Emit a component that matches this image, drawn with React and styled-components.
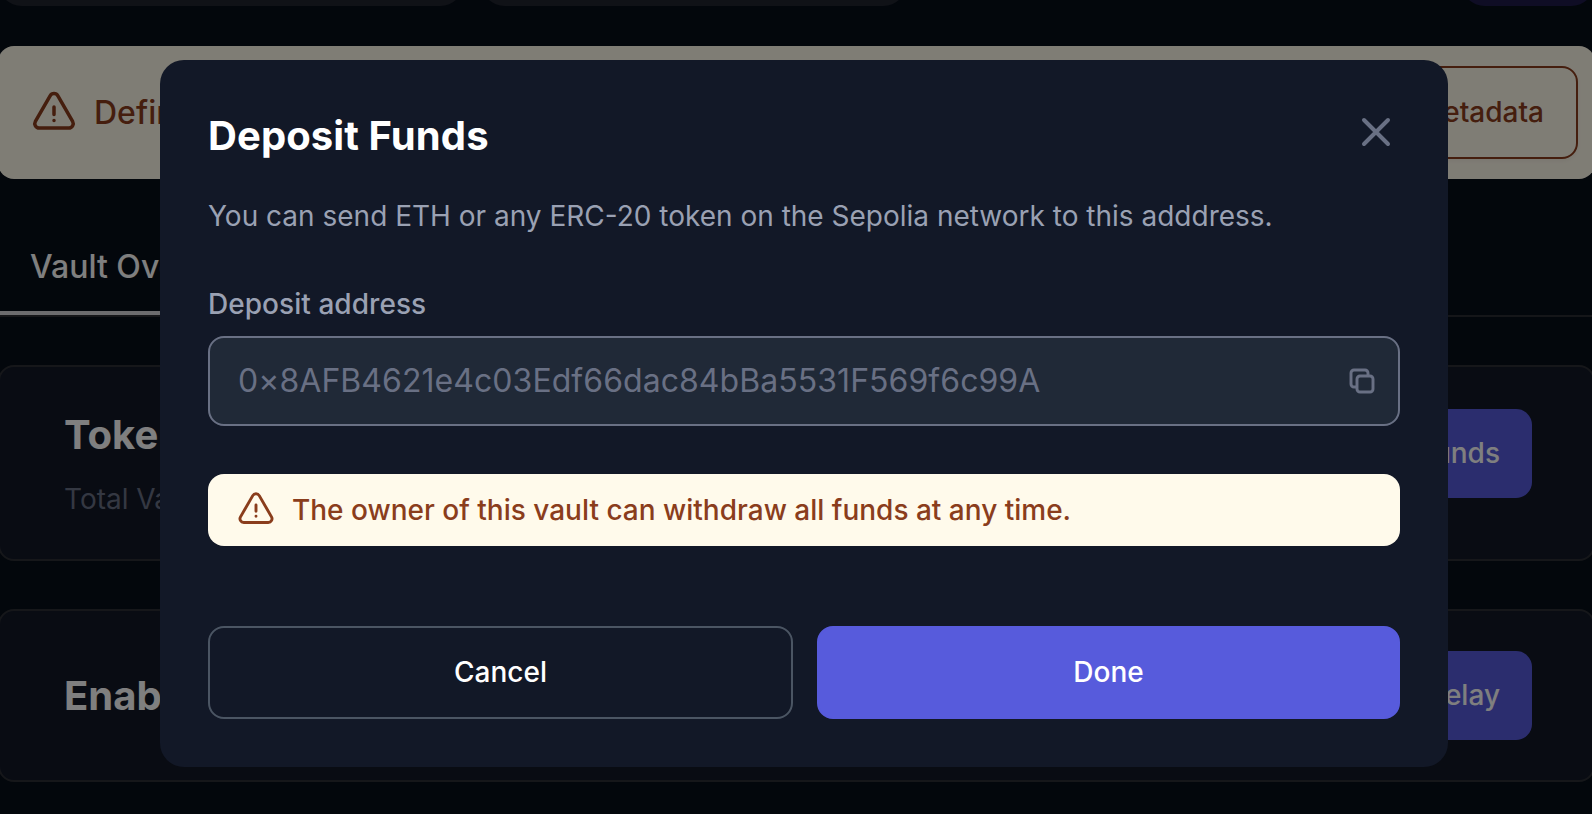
import React from "react";
import styled, { createGlobalStyle } from "styled-components";

const GlobalStyle = createGlobalStyle`
  *, *::before, *::after { box-sizing: border-box; }
  body { margin: 0; background: #080e18; }
  button, h2, h3, p { margin: 0; font: inherit; }
`;

const Screen = styled.div`
  position: relative;
  width: 1592px;
  height: 814px;
  overflow: hidden;
  background: #070e18;
  color: #fff;
  font-family: Inter, "Liberation Sans", sans-serif;
`;

const Page = styled.div`
  display: flex;
  flex-direction: column;
  width: 1597px;
  margin-left: -2px;
`;

const TopBar = styled.div`
  display: flex;
  height: 46px;
  align-items: flex-start;
`;

const TopPill = styled.div`
  width: ${(p) => p.$width}px;
  height: 6px;
  flex: none;
  margin-left: ${(p) => p.$gap};
  overflow: hidden;

  &::before {
    content: "";
    display: block;
    height: 80px;
    margin-top: -74px;
    border-radius: 24px;
    background: ${(p) => p.$color};
  }
`;

const Banner = styled.div`
  display: flex;
  align-items: center;
  gap: 16px;
  height: 133px;
  padding: 0 17px 0 32px;
  border-radius: 16px;
  background: #fffaeb;
  color: #8a3d1c;
  font-size: 32px;
  font-weight: 500;

  svg { flex: none; }
`;

const BannerButton = styled.button`
  height: 93px;
  margin-left: auto;
  padding: 0 32px 2px;
  border: 2px solid currentColor;
  border-radius: 16px;
  background: transparent;
  color: inherit;
  font-size: 28px;
  font-weight: 500;
  box-shadow: 0 2px 4px rgba(0, 0, 0, 0.05);
`;

const Tabs = styled.div`
  display: flex;
  height: 138px;
  align-items: flex-end;
  border-bottom: 2px solid #2a2c32;
`;

const Tab = styled.div`
  height: 68px;
  padding: 0 32px;
  border-bottom: 4px solid #d8d8dc;
  font-size: 32px;
  font-weight: 500;
  line-height: 39px;
`;

const Card = styled.section`
  display: flex;
  align-items: ${(p) => (p.$top ? "flex-start" : "center")};
  justify-content: space-between;
  height: ${(p) => p.$height}px;
  margin-top: 48px;
  padding: ${(p) => (p.$top ? "40px" : "0")} 61px 0 64px;
  border: 2px solid #2c2f35;
  border-radius: 16px;
  background: #121827;
`;

const CardTitle = styled.h3`
  font-size: 40px;
  font-weight: 700;
  line-height: 56px;
`;

const CardNote = styled.p`
  margin-top: 16px;
  color: #697084;
  font-size: 28px;
  line-height: 40px;
`;

const CardButton = styled.button`
  height: 89px;
  margin-top: ${(p) => p.$offset || 0}px;
  padding: 0 32px 2px;
  border: 0;
  border-radius: 16px;
  background: #575bdc;
  color: #fff;
  font-size: 28px;
  font-weight: 500;
`;

const Overlay = styled.div`
  position: absolute;
  inset: 0;
  display: flex;
  align-items: flex-start;
  padding: 60px 144px 0 160px;
  background: rgba(0, 0, 0, 0.5);
`;

const Modal = styled.div`
  display: flex;
  flex: 1;
  flex-direction: column;
  height: 707px;
  padding: 48px;
  border-radius: 24px;
  background: #121827;
`;

const ModalHeader = styled.div`
  display: flex;
  align-items: flex-start;
  justify-content: space-between;
`;

const ModalTitle = styled.h2`
  font-size: 40px;
  font-weight: 700;
  line-height: 56px;
  letter-spacing: 0.1px;
`;

const CloseButton = styled.button`
  display: flex;
  padding: 0;
  border: 0;
  background: none;
  color: #697084;
`;

const Description = styled.p`
  margin-top: 32px;
  color: #9aa1b3;
  font-size: 28px;
  line-height: 40px;
`;

const Label = styled.div`
  margin-top: 48px;
  color: #9aa1b3;
  font-size: 28px;
  font-weight: 500;
  line-height: 40px;
  letter-spacing: 0.05px;
`;

const AddressField = styled.div`
  display: flex;
  align-items: center;
  justify-content: space-between;
  height: 90px;
  margin-top: 12px;
  padding: 0 20px 0 28px;
  border: 2px solid #697084;
  border-radius: 16px;
  background: #202937;
  color: #697084;
  font-size: 32px;
`;

const Address = styled.span`
  padding-bottom: 2px;
  letter-spacing: 0.05px;
`;

const Alert = styled.div`
  display: flex;
  align-items: center;
  gap: 16px;
  height: 72px;
  margin-top: 48px;
  padding: 0 28px;
  border-radius: 16px;
  background: #fffaeb;
  color: #8a3d1c;
  font-size: 28px;
  font-weight: 500;

  svg { margin-bottom: 1px; }
`;

const Actions = styled.div`
  display: grid;
  grid-template-columns: 585px 583px;
  gap: 24px;
  margin-top: 80px;
`;

const ActionButton = styled.button`
  height: 93px;
  padding: 0 0 2px;
  border: 2px solid ${(p) => (p.$primary ? "#575bdc" : "#4b5563")};
  border-radius: 16px;
  background: ${(p) => (p.$primary ? "#575bdc" : "transparent")};
  color: #fff;
  font-size: 28px;
  font-weight: 500;
`;

function Icon({ size, stroke = 1.75, children }) {
  return (
    <svg width={size} height={size} viewBox="0 0 24 24" fill="none" stroke="currentColor" strokeWidth={stroke} strokeLinecap="round" strokeLinejoin="round">
      {children}
    </svg>
  );
}

const WarningIcon = ({ size }) => (
  <Icon size={size}>
    <path d="M12 9v3.75m-9.303 3.376c-.866 1.5.217 3.374 1.948 3.374h14.71c1.73 0 2.813-1.874 1.948-3.374L13.949 3.378c-.866-1.5-3.032-1.5-3.898 0L2.697 16.126ZM12 15.75h.007v.008H12v-.008Z" />
  </Icon>
);

const CloseIcon = () => (
  <Icon size={48} stroke={2}>
    <path d="M6 18L18 6M6 6l12 12" />
  </Icon>
);

const CopyIcon = () => (
  <Icon size={32} stroke={2.2}>
    <path d="M16.5 8.25V6a2.25 2.25 0 0 0-2.25-2.25H6A2.25 2.25 0 0 0 3.75 6v8.25A2.25 2.25 0 0 0 6 16.5h2.25m8.25-8.25H18a2.25 2.25 0 0 1 2.25 2.25V18A2.25 2.25 0 0 1 18 20.25h-7.5A2.25 2.25 0 0 1 8.25 18v-1.5m8.25-8.25h-6a2.25 2.25 0 0 0-2.25 2.25v6" />
  </Icon>
);

export default function App() {
  return (
    <Screen>
      <GlobalStyle />
      <Page>
        <TopBar>
          <TopPill $width={466} $gap="0" $color="#20242f" />
          <TopPill $width={426} $gap="17px" $color="#20242f" />
          <TopPill $width={134} $gap="auto" $color="#1e1b4b" />
        </TopBar>
        <Banner>
          <WarningIcon size={48} />
          <span>Define</span>
          <BannerButton>Metadata</BannerButton>
        </Banner>
        <Tabs>
          <Tab>Vault Overview</Tab>
        </Tabs>
        <Card $top $height={196}>
          <div>
            <CardTitle>Tokens</CardTitle>
            <CardNote>Total Value</CardNote>
          </div>
          <CardButton $offset={2}>Funds</CardButton>
        </Card>
        <Card $height={173}>
          <CardTitle>Enable</CardTitle>
          <CardButton>Delay</CardButton>
        </Card>
      </Page>
      <Overlay>
        <Modal>
          <ModalHeader>
            <ModalTitle>Deposit Funds</ModalTitle>
            <CloseButton aria-label="Close">
              <CloseIcon />
            </CloseButton>
          </ModalHeader>
          <Description>You can send ETH or any ERC-20 token on the Sepolia network to this adddress.</Description>
          <Label>Deposit address</Label>
          <AddressField>
            <Address>0×8AFB4621e4c03Edf66dac84bBa5531F569f6c99A</Address>
            <CopyIcon />
          </AddressField>
          <Alert>
            <WarningIcon size={40} />
            <span>The owner of this vault can withdraw all funds at any time.</span>
          </Alert>
          <Actions>
            <ActionButton>Cancel</ActionButton>
            <ActionButton $primary>Done</ActionButton>
          </Actions>
        </Modal>
      </Overlay>
    </Screen>
  );
}
